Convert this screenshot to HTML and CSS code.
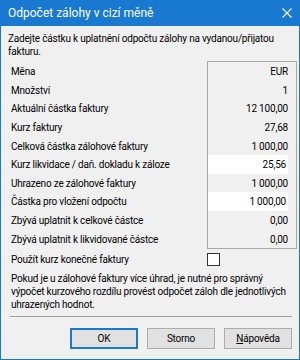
FILE: index.html
```html
<!DOCTYPE html>
<html>
    <head>
        <title>Odpočet zálohy v cizí měně</title>
        <meta charset="UTF-8">
        <link rel="stylesheet" href="styles.css">
    </head>
    <body>
        <div class="dialog">
            <div class="titlebar">
                <span class="title">Odpočet zálohy v cizí měně</span>
                <svg class="close" width="10" height="10" viewBox="0 0 10 10">
                    <path d="M0.5 0.5 L9.5 9.5 M9.5 0.5 L0.5 9.5" stroke="#fff" stroke-width="1.1" fill="none"/>
                </svg>
            </div>

            <p class="intro">Zadejte částku k uplatnění odpočtu zálohy na vydanou/přijatou<br>fakturu.</p>

            <div class="table">
                <div class="labels">
                    <div class="row">Měna</div>
                    <div class="row">Množství</div>
                    <div class="row">Aktuální částka faktury</div>
                    <div class="row">Kurz faktury</div>
                    <div class="row">Celková částka zálohové faktury</div>
                    <div class="row">Kurz likvidace / daň. dokladu k záloze</div>
                    <div class="row">Uhrazeno ze zálohové faktury</div>
                    <div class="row">Částka pro vložení odpočtu</div>
                    <div class="row">Zbývá uplatnit k celkové částce</div>
                    <div class="row">Zbývá uplatnit k likvidované částce</div>
                </div>
                <div class="values">
                    <div class="row">EUR</div>
                    <div class="row">1</div>
                    <div class="row">12 100,00</div>
                    <div class="row">27,68</div>
                    <div class="row">1 000,00</div>
                    <div class="row input">25,56</div>
                    <div class="row">1 000,00</div>
                    <div class="row input">1 000,00</div>
                    <div class="row">0,00</div>
                    <div class="row">0,00</div>
                </div>
            </div>

            <div class="check-row">
                <span class="check-label">Použít kurz konečné faktury</span>
                <span class="checkbox"></span>
            </div>

            <p class="note">Pokud je u zálohové faktury více úhrad, je nutné pro správný<br>výpočet kurzového rozdílu provést odpočet záloh dle jednotlivých<br>uhrazených hodnot.</p>

            <div class="separator"></div>

            <div class="buttons">
                <button class="btn default">OK</button>
                <button class="btn">Storno</button>
                <button class="btn"><u>N</u>ápověda</button>
            </div>
        </div>
    </body>
</html>
```

FILE: styles.css
```css
body
{
	margin:0px;
	padding:0px;
	background-color:#f0f0f0;
	font-family:"Segoe UI",Roboto,sans-serif;
	font-size:10px;
	letter-spacing:-0.2px;
	color:#000;
}

.dialog
{
	width:300px;
	height:360px;
	box-sizing:border-box;
	border:1px solid #1979d0;
	border-top:none;
	display:flex;
	flex-direction:column;
	overflow:hidden;
}

.titlebar
{
	height:26px;
	margin:0 -1px;
	background-color:#1979d0;
	color:#fff;
	display:flex;
	align-items:center;
	justify-content:space-between;
	padding:0 8px 0 8px;
	font-size:12px;
	letter-spacing:0;
}

.close
{
	margin-right:0px;
	margin-top:-1px;
}

.intro
{
	margin:6px 0 0 7px;
	line-height:13px;
	white-space:nowrap;
}

.table
{
	display:flex;
	margin-top:3px;
	padding-left:10px;
}

.labels
{
	flex:1;
	display:grid;
	grid-template-rows:repeat(10, 18.6px);
	padding-top:1px;
}

.values
{
	width:90px;
	height:188px;
	box-sizing:border-box;
	margin-right:2px;
	border:1px solid #a9a9a9;
	display:grid;
	grid-template-rows:repeat(10, 18.6px);
}

.row
{
	display:flex;
	align-items:center;
	padding-top:1px;
	white-space:nowrap;
}

.values .row
{
	justify-content:flex-end;
	padding-right:8px;
}

.values .input
{
	background-color:#fff;
	margin-right:8px;
	padding-right:2px;
}

.check-row
{
	display:flex;
	align-items:center;
	height:13px;
	margin-top:4px;
	padding-left:10px;
}

.check-label
{
	width:196px;
}

.checkbox
{
	width:13px;
	height:13px;
	box-sizing:border-box;
	border:1px solid #333;
	background-color:#fff;
}

.note
{
	margin:6px 0 0 10px;
	line-height:13px;
	white-space:nowrap;
}

.separator
{
	margin:5px 7px 0 9px;
	border-top:1px solid #a0a0a0;
}

.buttons
{
	display:flex;
	justify-content:flex-end;
	gap:9px;
	margin-top:11px;
	padding-right:7px;
}

.btn
{
	width:68px;
	height:21px;
	box-sizing:border-box;
	background-color:#e1e1e1;
	border:1px solid #adadad;
	font-family:inherit;
	font-size:10px;
	letter-spacing:-0.2px;
	color:#000;
	padding:0;
}

.btn u
{
	text-decoration:underline;
}

.default
{
	border:2px solid #1979d0;
}
```
